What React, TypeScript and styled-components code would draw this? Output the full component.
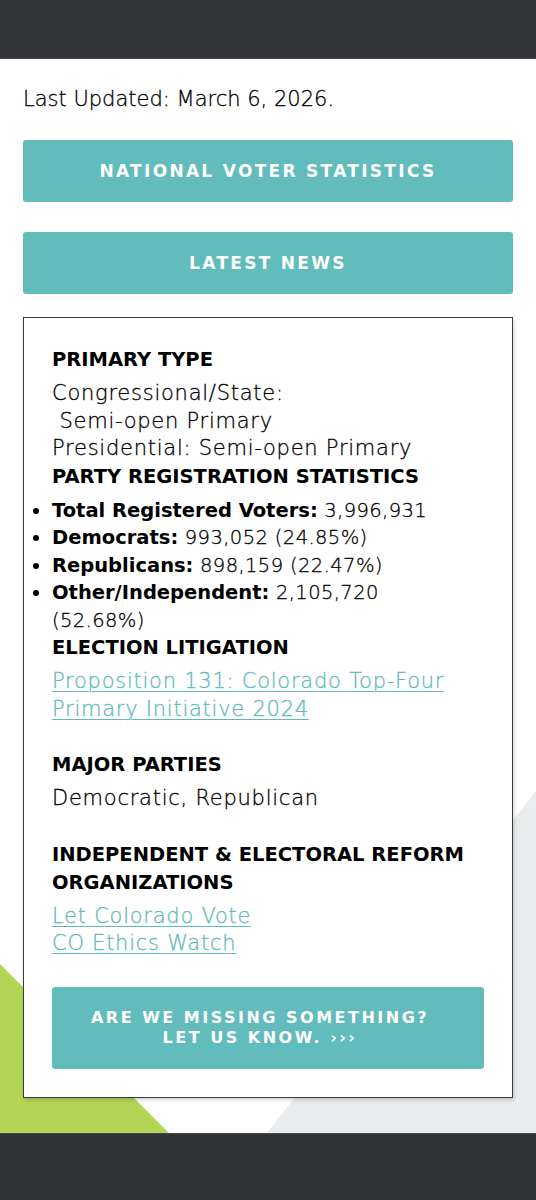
import React from "react";
import styled, { createGlobalStyle } from "styled-components";

const GlobalStyle = createGlobalStyle`
  html, body { margin: 0; padding: 0; background: #ffffff; }
  body { font-family: "DejaVu Sans", "Liberation Sans", sans-serif; color: #111; }
  * { box-sizing: border-box; }
`;

const TopBar = styled.header`
  height: 59px;
  background: #323336;
  border-bottom: 1px solid #4a4b4e;
`;

const Main = styled.main`
  position: relative;
  overflow: hidden;
  padding: 25px 23px 35px;
  display: flex;
  flex-direction: column;
`;

const Backdrop = styled.svg`
  position: absolute;
  left: 0;
  bottom: 0;
  width: 536px;
  height: 350px;
  z-index: 0;
`;

const Updated = styled.p`
  position: relative;
  margin: 0 0 26px;
  font-size: 21px;
  line-height: 30px;
  font-weight: 200;
  letter-spacing: 0;
  color: #000;
  -webkit-text-stroke: 0.3px #000;
`;

const WideButton = styled.a<{ $gap?: number }>`
  position: relative;
  display: flex;
  align-items: center;
  justify-content: center;
  height: 62px;
  margin-bottom: ${(p) => p.$gap ?? 0}px;
  background: #62bcbb;
  border-radius: 3px;
  color: #fff;
  font-weight: 700;
  font-size: 17px;
  letter-spacing: 2.3px;
  text-decoration: none;
  text-transform: uppercase;
`;

const Card = styled.section`
  position: relative;
  z-index: 1;
  background: #fff;
  border: 1px solid #3c3c3c;
  box-shadow: 1px 2px 4px rgba(0, 0, 0, 0.18);
  padding: 28px 28px 28px;
`;

const Heading = styled.h5`
  margin: 0 0 6px;
  font-size: 19.5px;
  line-height: 28px;
  font-weight: 700;
  color: #000;
  text-transform: uppercase;
`;

const Text = styled.p<{ $space?: number }>`
  margin: 0 0 ${(p) => p.$space ?? 0}px;
  font-size: 21px;
  line-height: 27.5px;
  font-weight: 200;
  letter-spacing: 0.75px;
  color: #000;
  -webkit-text-stroke: 0.3px currentColor;
`;

const Link = styled.a`
  color: #5fbab9;
  text-decoration: underline;
  text-underline-offset: 3px;
  text-decoration-thickness: 1px;
`;

const List = styled.ul`
  margin: 0;
  padding: 0 20px 0 0;
  list-style: disc outside;
  font-size: 19.5px;
  line-height: 27.5px;
  font-weight: 200;
  letter-spacing: 0.4px;
  color: #000;
`;

const Item = styled.li`
  -webkit-text-stroke: 0.3px #000;
  &::marker { color: #000; }
  b { font-weight: 700; color: #000; letter-spacing: 0; -webkit-text-stroke: 0; }
`;

const CtaButton = styled.a`
  display: block;
  padding: 21px 32px 21px 16px;
  background: #62bcbb;
  border-radius: 3px;
  color: #fff;
  text-align: center;
  font-weight: 700;
  font-size: 16px;
  line-height: 20px;
  letter-spacing: 2.5px;
  text-decoration: none;
  text-transform: uppercase;
`;

const Footer = styled.footer`
  height: 68px;
  background: #313235;
  border-top: 1px solid #4a4b4e;
`;

export default function App() {
  return (
    <>
      <GlobalStyle />
      <TopBar />
      <Main>
        <Backdrop viewBox="0 0 536 350" aria-hidden="true">
          <polygon points="0,181 169,350 0,350" fill="#b3d555" />
          <polygon points="536,8 536,350 267,350" fill="#ebeced" />
        </Backdrop>
        <Updated>Last Updated: March 6, 2026.</Updated>
        <WideButton href="#" $gap={30}>National Voter Statistics</WideButton>
        <WideButton href="#" $gap={23}>Latest News</WideButton>
        <Card>
          <Heading>Primary Type</Heading>
          <Text>
            Congressional/State:
            <br />
            &nbsp;Semi-open Primary
            <br />
            Presidential: Semi-open Primary
          </Text>
          <Heading>Party Registration Statistics</Heading>
          <List>
            <Item>
              <b>Total Registered Voters:</b> 3,996,931
            </Item>
            <Item>
              <b>Democrats:</b> 993,052 (24.85%)
            </Item>
            <Item>
              <b>Republicans:</b> 898,159 (22.47%)
            </Item>
            <Item>
              <b>Other/Independent:</b> 2,105,720 (52.68%)
            </Item>
          </List>
          <Heading>Election Litigation</Heading>
          <Text $space={28}>
            <Link href="#">Proposition 131: Colorado Top-Four Primary Initiative 2024</Link>
          </Text>
          <Heading>Major Parties</Heading>
          <Text $space={28}>Democratic, Republican</Text>
          <Heading>Independent &amp; Electoral Reform Organizations</Heading>
          <Text $space={29}>
            <Link href="#">Let Colorado Vote</Link>
            <br />
            <Link href="#">CO Ethics Watch</Link>
          </Text>
          <CtaButton href="#">
            Are we missing something?
            <br />
            Let us know. ›››
          </CtaButton>
        </Card>
      </Main>
      <Footer />
    </>
  );
}
